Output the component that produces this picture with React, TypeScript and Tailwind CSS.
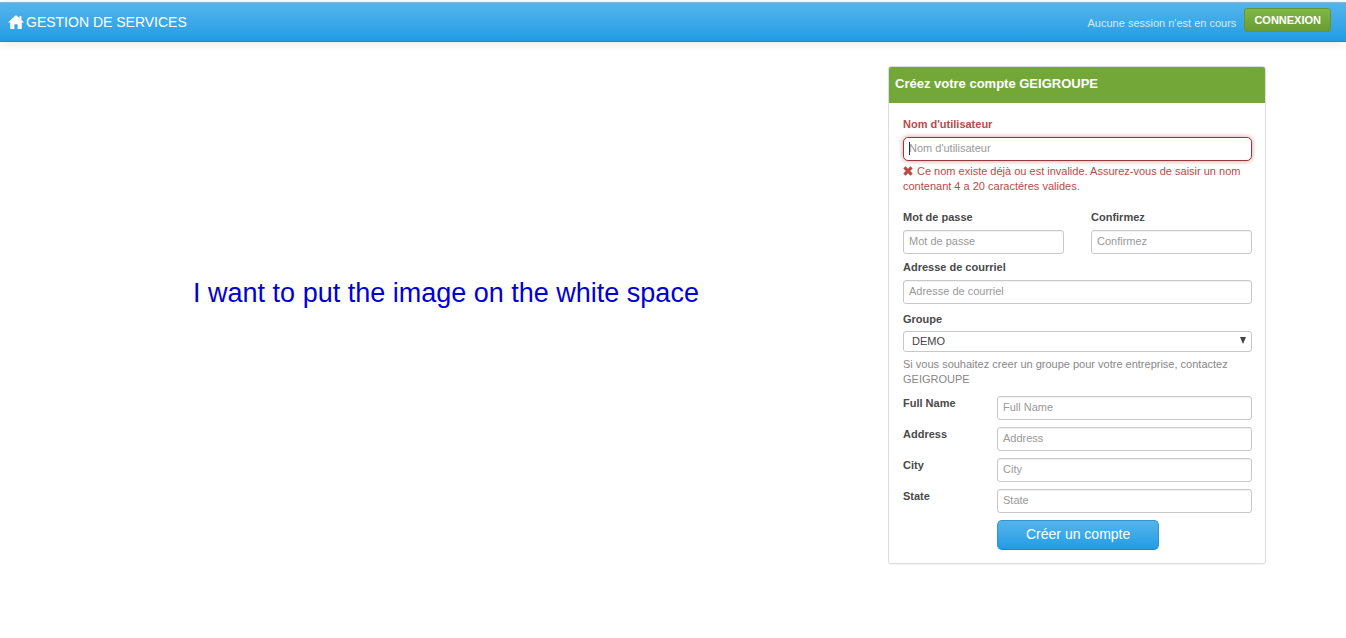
import React from 'react';
import clsx from 'clsx';

interface FieldProps {
  id: string;
  label: string;
  type?: string;
}

const inputClass =
  'block h-6 w-full rounded-[3px] border border-[#c8c8c8] bg-white px-[5px] pb-[2px] text-[11px] text-[#555] shadow-[inset_0_1px_1px_rgba(0,0,0,0.06)] outline-none placeholder:text-[#999]';

const labelClass = 'block text-[11px] leading-[15px] font-bold text-[#4a4a4a]';

const detailFields: FieldProps[] = [
  { id: 'full-name', label: 'Full Name' },
  { id: 'address', label: 'Address' },
  { id: 'city', label: 'City' },
  { id: 'state', label: 'State' },
];

const HomeIcon = () => (
  <svg viewBox="0 0 16 14" className="h-[14px] w-4 fill-white" aria-hidden="true">
    <path d="M8 0 0 7.6h2.2V14h4.2V9.2h3.2V14h4.2V7.6H16L13.4 5.1V1h-2v2.2z" />
  </svg>
);

const CrossIcon = () => (
  <svg viewBox="0 0 10 10" className="mr-1 inline-block h-[10px] w-[10px] align-[-1px] fill-[#b94a48]" aria-hidden="true">
    <path d="M2.5 0.3 5 2.8 7.5 0.3 9.7 2.4 7.2 5 9.7 7.6 7.5 9.7 5 7.2 2.5 9.7 0.3 7.6 2.8 5 0.3 2.4z" />
  </svg>
);

const StackedField: React.FC<FieldProps> = ({ id, label, type = 'text' }) => (
  <div className="flex-1">
    <label htmlFor={id} className={clsx(labelClass, 'mb-[5px]')}>{label}</label>
    <input id={id} type={type} placeholder={label} className={inputClass} />
  </div>
);

const InlineField: React.FC<FieldProps> = ({ id, label, type = 'text' }) => (
  <div className="flex items-start">
    <label htmlFor={id} className={clsx(labelClass, 'w-[94px] shrink-0')}>{label}</label>
    <input id={id} type={type} placeholder={label} className={inputClass} />
  </div>
);

const Header = () => (
  <header className="mt-[2px] flex h-10 items-center justify-between border-t border-b border-t-[#83b4d3] border-b-[#1b8bd0] bg-linear-to-b from-[#54b4eb] to-[#1d9ce5] pr-[15px] pl-2 shadow-[0_1px_10px_rgba(0,0,0,0.1)]">
    <a href="#" className="flex items-center gap-[2px] text-sm text-white">
      <HomeIcon />
      GESTION DE SERVICES
    </a>
    <div className="flex items-center gap-2">
      <span className="pt-[2px] text-[11px] text-[#d5ecfa]">Aucune session n'est en cours</span>
      <button type="button" className="mb-1 h-6 rounded-[3px] border border-[#669533] bg-linear-to-b from-[#80b846] to-[#699b35] px-[9px] text-[11px] font-bold text-white">
        CONNEXION
      </button>
    </div>
  </header>
);

const SignupForm = () => (
  <form className="pt-[14px] pr-[13px] pb-[13px] pl-[14px]" onSubmit={(e) => e.preventDefault()}>
    <label htmlFor="username" className="mb-[5px] block text-[11px] leading-[15px] font-bold text-[#b94a48]">Nom d'utilisateur</label>
    <div className="relative">
      <input
        id="username"
        type="text"
        placeholder="Nom d'utilisateur"
        aria-invalid="true"
        aria-describedby="username-error"
        className="block h-6 w-full rounded-[5px] border border-[#953b39] bg-white px-[5px] pb-[2px] text-[11px] text-[#555] shadow-[0_0_5px_#d59392] outline-none placeholder:text-[#999]"
      />
      <span className="absolute top-[5px] left-[6px] h-[13px] w-px bg-[#333]" />
    </div>
    <p id="username-error" className="mt-[3px] text-[11px] leading-[15px] text-[#b94a48]">
      <CrossIcon />
      Ce nom existe déjà ou est invalide. Assurez-vous de saisir un nom contenant 4 a 20 caractéres valides.
    </p>

    <div className="mt-4 flex gap-[27px]">
      <StackedField id="password" label="Mot de passe" type="password" />
      <StackedField id="confirm" label="Confirmez" type="password" />
    </div>

    <div className="mt-[6px]">
      <StackedField id="email" label="Adresse de courriel" type="email" />
    </div>

    <label htmlFor="group" className={clsx(labelClass, 'mt-2 mb-1')}>Groupe</label>
    <div className="relative">
      <select id="group" className="block h-[21px] w-full appearance-none rounded-[3px] border border-[#c8c8c8] bg-white px-2 text-[11px] text-[#444] outline-none">
        <option>DEMO</option>
      </select>
      <svg viewBox="0 0 6 7" className="pointer-events-none absolute top-[6px] right-[6px] h-[7px] w-[6px] fill-[#444]" aria-hidden="true">
        <path d="M0 0h6L3 7z" />
      </svg>
    </div>
    <p className="mt-[5px] text-[11px] leading-[15px] text-[#888]">
      Si vous souhaitez creer un groupe pour votre entreprise, contactez GEIGROUPE
    </p>

    <div className="mt-[9px] flex flex-col gap-[7px]">
      {detailFields.map((field) => (
        <InlineField key={field.id} {...field} />
      ))}
      <button type="submit" className="ml-[94px] h-[30px] self-start rounded-[5px] border border-[#2f96d5] border-b-[#1b84c4] bg-linear-to-b from-[#54b4eb] to-[#1d9ce5] px-7 pb-[2px] text-sm text-white">
        Créer un compte
      </button>
    </div>
  </form>
);

export default function App() {
  return (
    <div className="min-h-screen overflow-hidden bg-white font-['Liberation_Sans',Arial,sans-serif]">
      <Header />
      <main className="flex pt-6 pr-20">
        <div className="flex-1 pt-[206px] pl-1 text-center">
          <p className="text-[27px] leading-[42px] text-[#0000d4]">I want to put the image on the white space</p>
        </div>
        <section className="w-[378px] rounded-[3px] border border-[#ddd] bg-white shadow-[0_1px_1px_rgba(0,0,0,0.05)]">
          <h1 className="h-9 rounded-t-[2px] bg-[#73a839] px-[6px] text-[13px] leading-[33px] font-bold text-white">
            Créez votre compte GEIGROUPE
          </h1>
          <SignupForm />
        </section>
      </main>
    </div>
  );
}
